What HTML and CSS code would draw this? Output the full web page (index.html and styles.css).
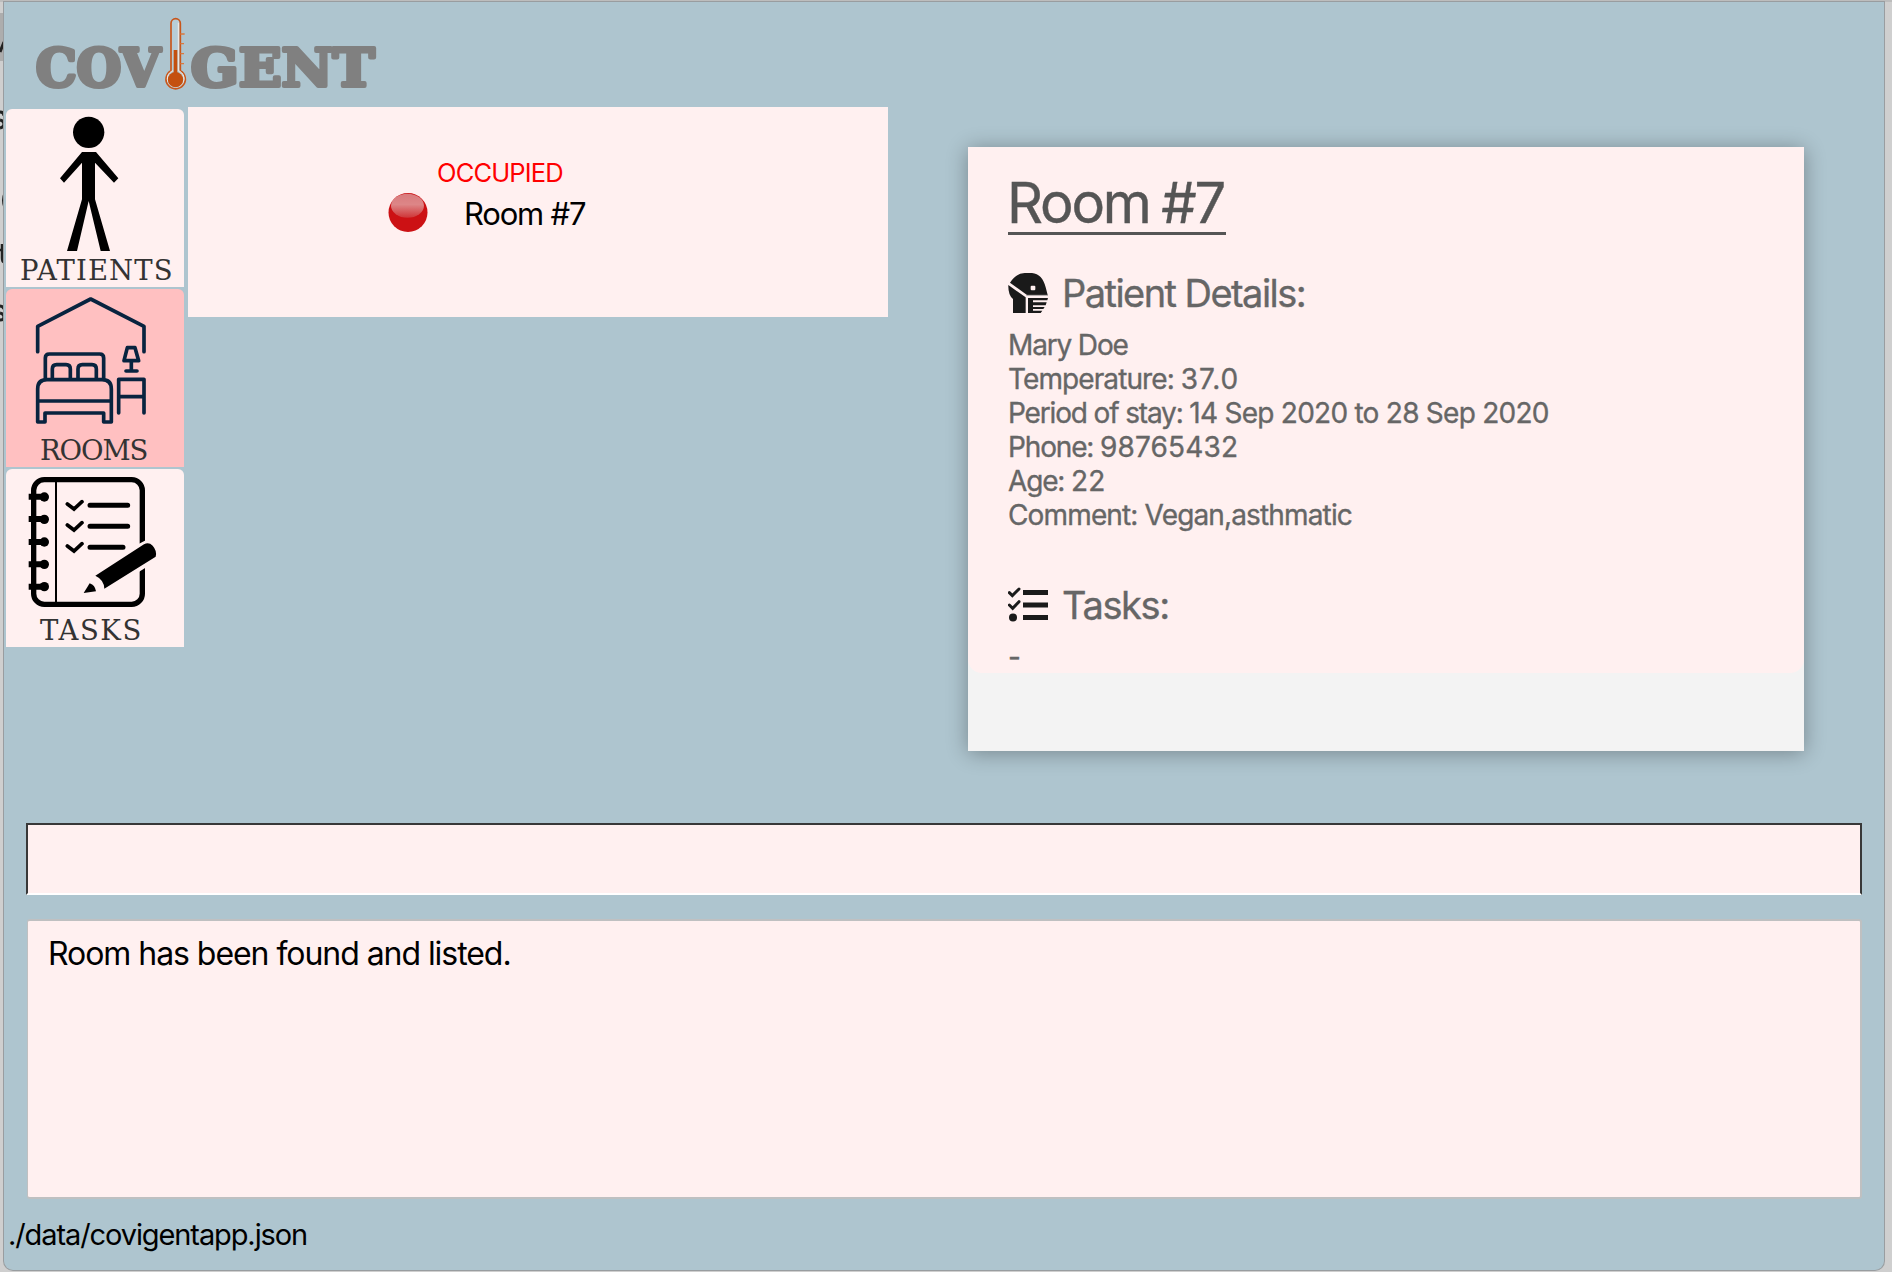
FILE: index.html
```html
<!DOCTYPE html>
<html lang="en">
<head>
<meta charset="utf-8">
<title>Covigent</title>
<link rel="stylesheet" href="styles.css">
</head>
<body>
<div class="desktop">
  <div class="backdrop" aria-hidden="true">
    <i class="backdrop-bar"></i>
    <svg width="4" height="340" viewBox="0 0 4 340" fill="none" stroke="#222">
      <path d="M0 52L4 42" stroke-width="3"/>
      <path d="M0 112Q4 112 4 116M0 120Q4 121 4 124T0 128" stroke-width="3"/>
      <path d="M5 193Q2 200 5 208" stroke-width="3"/>
      <path d="M0 250H4M2 244V258Q2 262 4 262" stroke-width="2.500"/>
      <path d="M0 306Q3 306 4 309M0 313Q4 314 4 317T0 320" stroke-width="3"/>
    </svg>
  </div>
  <div class="window">
    <header class="header">
      <svg class="logo" viewBox="90 36 1050 246" width="350" height="82">
        <g class="logo-text">
          <text x="107" y="259" textLength="374" lengthAdjust="spacingAndGlyphs">COV</text>
          <text x="572" y="259" textLength="552" lengthAdjust="spacingAndGlyphs">GENT</text>
        </g>
        <path d="M513 212V70a14 14 0 0 1 28 0V212A29 29 0 1 1 513 212Z" fill="#b7cdd6" stroke="#c8561b" stroke-width="5"/>
        <path d="M535 68V212A25 25 0 1 1 519 212" fill="none" stroke="#f3ece6" stroke-width="3"/>
        <circle cx="526.500" cy="239" r="23" fill="#c4500f"/>
        <path d="M526.500 150V225" stroke="#c4500f" stroke-width="11"/>
        <path d="M541 102H554M541 131H552M541 161H552M541 191H552" stroke="#d9783f" stroke-width="4"/>
      </svg>
    </header>

    <main class="main">
      <nav class="tabs">
        <a class="tab">
          <svg viewBox="18 27 534 438" width="178" height="146">
            <circle cx="266" cy="97" r="47"/>
            <path d="M246 156H288L355 235 342 248 285 188V298L330 453H302L266 303 231 453H201L246 298V188L192 248 180 235Z"/>
          </svg>
          <span class="tab-label label-patients">PATIENTS</span>
        </a>
        <a class="tab active">
          <svg class="line-icon" viewBox="18 12 534 438" width="178" height="146">
            <path d="M113 200V124L272 42 432 124V200"/>
            <path d="M136 281V219Q136 207 148 207H299Q311 207 311 219V281"/>
            <path d="M157 281V252Q157 239 170 239H198Q211 239 211 252V281M234 281V252Q234 239 247 239H276Q289 239 289 252V281"/>
            <path d="M113 411V312Q113 284 141 284H306Q334 284 334 312V411H311V384H135V411ZM113 348H334"/>
            <path d="M382 188H405L416 227H372ZM394 229V257M378 258H411"/>
            <path d="M356 384V283H432V384M356 335H432"/>
          </svg>
          <span class="tab-label label-rooms">ROOMS</span>
        </a>
        <a class="tab">
          <svg viewBox="18 12 534 438" width="178" height="146">
            <rect x="101" y="44" width="326" height="374" rx="32" fill="none" stroke="#000" stroke-width="16"/>
            <path d="M168 44V418" stroke="#000" stroke-width="6"/>
            <path d="M86 95H130M86 162H130M86 231H130M86 298H130M86 365H130" stroke="#000" stroke-width="18"/>
            <circle cx="133" cy="96" r="14"/><circle cx="133" cy="163" r="14"/><circle cx="133" cy="231" r="14"/><circle cx="133" cy="298" r="14"/><circle cx="133" cy="365" r="14"/>
            <path d="M202 117L222 132 246 110M202 180L222 195 246 173M202 243L222 258 246 236" fill="none" stroke="#000" stroke-width="11" stroke-linecap="round"/>
            <path d="M270 121H383M270 184H383M270 247H369" stroke="#000" stroke-width="15" stroke-linecap="round"/>
            <path d="M410 240L440 224 450 224V300L410 325Z" fill="#fff0f0"/>
            <path d="M286 332L432 238Q446 230 458 242 472 258 467 275L313 371Q312 344 286 332Z"/>
            <path d="M269 355Q285 360 288 379L251 384Z"/>
          </svg>
          <span class="tab-label label-tasks">TASKS</span>
        </a>
      </nav>

      <section class="room-list">
        <div class="room-status">OCCUPIED</div>
        <div class="room-row">
          <svg width="40" height="40" viewBox="0 0 40 40">
            <defs>
              <linearGradient id="shine" x1="0" y1="0" x2="0" y2="1">
                <stop offset="0" stop-color="#d87b7d"/><stop offset=".45" stop-color="#dd8687"/><stop offset="1" stop-color="#cf3537"/>
              </linearGradient>
            </defs>
            <circle cx="20" cy="19.500" r="19.500" fill="#cc1114"/>
            <ellipse cx="19.500" cy="12.700" rx="16.500" ry="12" fill="url(#shine)"/>
          </svg>
          <span class="room-name">Room #7</span>
        </div>
      </section>

      <section class="card">
        <div class="card-body">
          <h1 class="card-title">Room #7</h1>
          <h2 class="card-heading">
            <svg width="40" height="40" viewBox="0 0 120 120">
              <path d="M6 29Q24 0 50 0H72Q103 3 113 43L119 66H57Z" fill="#1a1a1a"/>
              <path d="M1 36L53 73V120H15V78Q0 66 1 36Z" fill="#1a1a1a"/>
              <path d="M60 75H120L118 82H75V88H116L113 97H75V102H110L106 108H75V113H103L98 120H60Z" fill="#1a1a1a"/>
              <rect x="68" y="38" width="14" height="14" rx="3" fill="#fff0f0"/>
              <path d="M55 67H120" stroke="#a9a3a3" stroke-width="3"/>
            </svg>
            <span>Patient Details:</span>
          </h2>
          <ul class="details">
            <li>Mary Doe</li>
            <li class="temperature">Temperature: <span class="temp-value">37.0</span></li>
            <li>Period of stay: <span class="dates">14 Sep 2020 to 28 Sep 2020</span></li>
            <li>Phone: <span class="number">98765432</span></li>
            <li>Age: <span class="number">22</span></li>
            <li class="comment">Comment: Vegan,asthmatic</li>
          </ul>
          <h2 class="card-heading heading-tasks">
            <svg width="40" height="40" viewBox="0 0 120 120">
              <path d="M45 19.500H120M45 57H120M45 94.500H120" stroke="#1a1a1a" stroke-width="15"/>
              <path d="M4 20L13 29 33 9M4 57L14 67 33 47" fill="none" stroke="#1a1a1a" stroke-width="9" stroke-linecap="round"/>
              <circle cx="15" cy="94.500" r="12" fill="#1a1a1a"/>
            </svg>
            <span>Tasks:</span>
          </h2>
          <p class="no-tasks">-</p>
        </div>
      </section>
    </main>

    <div class="command-box"></div>
    <div class="result-box">Room has been found and listed.</div>
    <footer class="status-bar">./data/covigentapp.json</footer>
  </div>
</div>
</body>
</html>
```
FILE: styles.css
```css
* { box-sizing: border-box; }

body {
  margin: 0;
  font-family: Inter, "Liberation Sans", sans-serif;
  color: #000;
}

h1, h2, p, ul { margin: 0; padding: 0; font-weight: 400; }
ul { list-style: none; }
svg { display: block; flex: none; }

.desktop {
  position: relative;
  width: 1892px;
  height: 1272px;
  padding: 2px 8px 2px 4px;
  background: linear-gradient(#bdbdbd 0, #bdbdbd 2px, #cfcfcf 2px);
  overflow: hidden;
}

/* Sliver of the page behind the window's left edge */
.backdrop {
  position: absolute;
  left: 0;
  top: 0;
  width: 4px;
  height: 1272px;
}
.backdrop svg { position: absolute; left: 0; top: 0; }
.backdrop-bar { position: absolute; left: 0; top: 13px; width: 4px; height: 48px; background: #adadad; }

.window {
  position: relative;
  height: 1268px;
  display: flex;
  flex-direction: column;
  background: #aec5cf;
  border-radius: 0 0 9px 9px;
  box-shadow: 0 0 0 1px #999da0;
}

.header { height: 105px; padding: 10px 0 0 26px; flex: none; }
.logo { overflow: visible; }
.logo-text text {
  font-family: "DejaVu Serif", serif;
  font-weight: 700;
  font-size: 157px;
  fill: #808080;
  stroke: #808080;
  stroke-width: 12;
  stroke-linejoin: round;
}

.main { display: flex; align-items: flex-start; height: 716px; flex: none; }

.tabs { display: flex; flex-direction: column; gap: 2px; padding: 2px 0 0 2px; width: 184px; flex: none; }
.tab {
  display: flex;
  flex-direction: column;
  width: 178px;
  height: 178px;
  background: #fff0f0;
  border-radius: 6px 6px 0 0;
}
.tab.active { background: #ffc0c1; }
.line-icon { fill: none; stroke: #08233f; stroke-width: 11; stroke-linecap: round; stroke-linejoin: round; }
.tab-label {
  font-family: "DejaVu Serif", serif;
  font-size: 27.5px;
  line-height: 30px;
  color: #333;
  white-space: nowrap;
}
.label-patients { padding-left: 14px; letter-spacing: 1.1px; }
.label-rooms { padding-left: 34px; letter-spacing: -1.1px; }
.label-tasks { padding-left: 34px; letter-spacing: 1.6px; }

.room-list {
  width: 700px;
  height: 210px;
  padding: 46px 0 0 200px;
  background: #fff0f0;
  flex: none;
}
.room-status { padding-left: 49px; font-size: 25.5px; line-height: 40px; letter-spacing: -.85px; color: #f00; }
.room-row { display: flex; align-items: flex-start; gap: 36px; }
.room-name { font-size: 31px; line-height: 42px; letter-spacing: -1.2px; }

.card {
  width: 836px;
  height: 604px;
  margin: 40px 0 0 80px;
  background: #f3f3f3;
  box-shadow: 0 2px 20px rgba(0, 0, 0, .32);
  flex: none;
}
.card-body {
  height: 526px;
  padding: 26px 0 0 40px;
  background: #fff0f0;
  border-radius: 0 0 14px 14px;
  color: #666;
  -webkit-text-stroke: .35px #666;
}
.card-title {
  width: 218px;
  padding-top: 1px;
  font-size: 56px;
  line-height: 58px;
  letter-spacing: -2.2px;
  word-spacing: -2px;
  text-indent: -1px;
  white-space: nowrap;
  color: #555;
  -webkit-text-stroke: .4px #555;
  border-bottom: 3px solid #555;
}
.card-heading {
  display: flex;
  gap: 14px;
  margin-top: 38px;
  font-size: 38px;
  line-height: 40px;
  letter-spacing: -1.55px;
}
.heading-tasks { margin-top: 54px; letter-spacing: -1.35px; }
.heading-tasks span { line-height: 38px; }
.details { margin-top: 15px; font-size: 28px; line-height: 34px; letter-spacing: -1.15px; white-space: nowrap; }
.temperature { letter-spacing: -.9px; }
.temp-value { letter-spacing: .9px; }
.dates { letter-spacing: -.74px; }
.number { letter-spacing: .15px; }
.comment { letter-spacing: -.85px; }
.no-tasks { margin-top: 14px; font-size: 28px; line-height: 34px; }

.command-box {
  width: 1836px;
  height: 72px;
  margin-left: 22px;
  background: #fff0f0;
  border: 2px solid #383838;
  border-bottom-color: #fff;
  flex: none;
}
.result-box {
  width: 1835px;
  height: 280px;
  margin: 24px 0 0 23px;
  padding: 13px 0 0 20px;
  background: #fff0f0;
  border: 2px solid #bfc0c1;
  border-left-width: 1px;
  border-radius: 3px;
  font-size: 32px;
  line-height: 40px;
  letter-spacing: -1.05px;
  flex: none;
}
.status-bar { padding: 16px 0 0 4px; font-size: 29px; line-height: 40px; letter-spacing: -1.1px; }
```
